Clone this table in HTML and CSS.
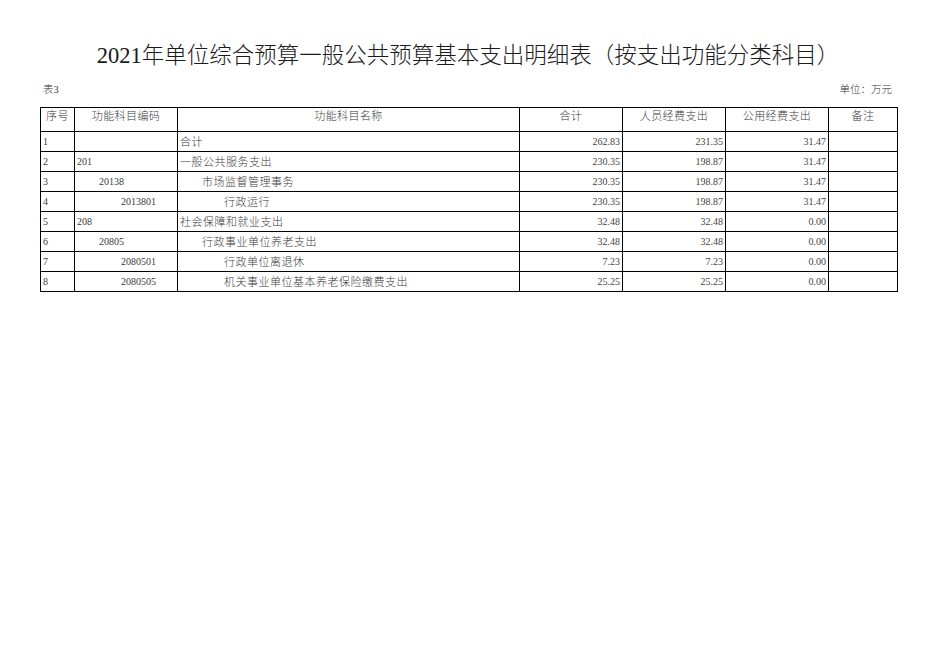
FILE: index.html
```html
<!DOCTYPE html>
<html lang="zh-CN">
<head>
<meta charset="utf-8">
<title>2021年单位综合预算一般公共预算基本支出明细表</title>
<link rel="stylesheet" href="styles.css">
</head>
<body>
<div class="page">
  <h1 class="title">2021年单位综合预算一般公共预算基本支出明细表（按支出功能分类科目）</h1>
  <div class="meta">
    <span class="meta-left">表3</span>
    <span class="meta-right">单位：万元</span>
  </div>
  <table class="grid">
    <colgroup>
      <col class="c-no">
      <col class="c-code">
      <col class="c-name">
      <col class="c-num">
      <col class="c-num">
      <col class="c-num">
      <col class="c-note">
    </colgroup>
    <thead>
      <tr>
        <th>序号</th>
        <th>功能科目编码</th>
        <th>功能科目名称</th>
        <th>合计</th>
        <th>人员经费支出</th>
        <th>公用经费支出</th>
        <th>备注</th>
      </tr>
    </thead>
    <tbody>
      <tr><td class="no">1</td><td class="code"></td><td class="name">合计</td><td class="num">262.83</td><td class="num">231.35</td><td class="num">31.47</td><td></td></tr>
      <tr><td class="no">2</td><td class="code">201</td><td class="name">一般公共服务支出</td><td class="num">230.35</td><td class="num">198.87</td><td class="num">31.47</td><td></td></tr>
      <tr><td class="no">3</td><td class="code l1">20138</td><td class="name l1">市场监督管理事务</td><td class="num">230.35</td><td class="num">198.87</td><td class="num">31.47</td><td></td></tr>
      <tr><td class="no">4</td><td class="code l2">2013801</td><td class="name l2">行政运行</td><td class="num">230.35</td><td class="num">198.87</td><td class="num">31.47</td><td></td></tr>
      <tr><td class="no">5</td><td class="code">208</td><td class="name">社会保障和就业支出</td><td class="num">32.48</td><td class="num">32.48</td><td class="num">0.00</td><td></td></tr>
      <tr><td class="no">6</td><td class="code l1">20805</td><td class="name l1">行政事业单位养老支出</td><td class="num">32.48</td><td class="num">32.48</td><td class="num">0.00</td><td></td></tr>
      <tr><td class="no">7</td><td class="code l2">2080501</td><td class="name l2">行政单位离退休</td><td class="num">7.23</td><td class="num">7.23</td><td class="num">0.00</td><td></td></tr>
      <tr><td class="no">8</td><td class="code l2">2080505</td><td class="name l2">机关事业单位基本养老保险缴费支出</td><td class="num">25.25</td><td class="num">25.25</td><td class="num">0.00</td><td></td></tr>
    </tbody>
  </table>
</div>
</body>
</html>
```
FILE: styles.css
```css
html, body {
  margin: 0;
  padding: 0;
  background: #ffffff;
}
body {
  font-family: "Liberation Serif", "Noto Sans CJK SC", serif;
  color: #333;
}
.page {
  width: 936px;
  padding-top: 41px;
}
.title {
  margin: 0;
  text-align: center;
  font-family: "Liberation Serif", "Noto Sans CJK SC", serif;
  font-weight: 300;
  font-size: 22.5px;
  line-height: 30px;
  color: #1a1a1a;
}
.meta {
  display: flex;
  justify-content: space-between;
  margin: 12px 44px 10px 43px;
  font-size: 10.5px;
  line-height: 14px;
  font-weight: 300;
  color: #333;
}
.grid {
  margin-left: 40px;
  width: 857px;
  table-layout: fixed;
  border-collapse: collapse;
  font-size: 11px;
  font-weight: 300;
  color: #3a3a3a;
}
.c-no { width: 34px; }
.c-code { width: 103px; }
.c-name { width: 342px; }
.c-num { width: 103px; }
.c-note { width: 69px; }
.grid th, .grid td {
  border: 1px solid #000;
  padding: 0 2px;
  white-space: nowrap;
  overflow: hidden;
}
.grid th {
  height: 22px;
  font-weight: 300;
  text-align: center;
  vertical-align: top;
  padding-top: 1px;
  line-height: 14px;
  letter-spacing: 0.4px;
}
.grid td {
  height: 19px;
  line-height: 14px;
  vertical-align: middle;
}
.grid td.name {
  letter-spacing: 0.5px;
}
.grid td.code, .grid td.no {
  font-size: 10px;
}
.grid td.num {
  text-align: right;
  font-size: 10px;
  color: #444;
}
.grid td.l1 { padding-left: 24px; }
.grid td.l2 { padding-left: 46px; }
```
